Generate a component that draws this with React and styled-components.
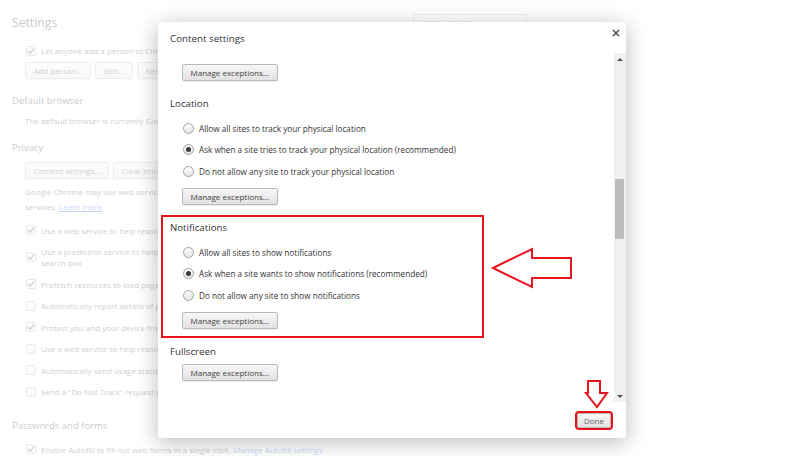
import React, { useLayoutEffect, useRef } from "react";
import styled, { createGlobalStyle } from "styled-components";

const GlobalStyle = createGlobalStyle`
  * { box-sizing: border-box; }
  html, body { margin: 0; padding: 0; background: #fff; }
  body {
    width: 800px;
    height: 456px;
    overflow: hidden;
    font-family: "Open Sans", "Noto Sans", Arial, sans-serif;
  }
  #root { position: relative; width: 800px; height: 456px; overflow: hidden; }
`;

/* ---------- settings page behind the overlay ---------- */

const Page = styled.div`
  width: 800px;
  height: 456px;
  padding: 0 12px;
  color: #333;
`;

const Header = styled.header`
  display: flex;
  align-items: center;
  justify-content: space-between;
  width: 515px;
  height: 38px;
  padding-top: 7px;
  border-bottom: 1px solid #e6e6e6;
`;

const PageTitle = styled.h1`
  margin: 0;
  font-size: 12.2px;
  font-weight: 400;
  color: #222;
`;

const SearchBox = styled.div`
  width: 114px;
  height: 16px;
  border: 1px solid #c8c8c8;
  font-size: 7.5px;
  line-height: 14px;
  padding-left: 4px;
  color: #999;
`;

const BgSection = styled.section`
  display: flex;
  flex-direction: column;
  align-items: flex-start;
  margin-top: ${({ $gap }) => $gap || 0}px;
`;

const BgHeading = styled.h3`
  margin: 0 0 4px;
  font-size: 9.5px;
  line-height: 16px;
  font-weight: 400;
  color: #222;
`;

const BgText = styled.p`
  margin: ${({ $top }) => $top || 0}px 0 0 13px;
  font-size: 8px;
  line-height: 15px;
  white-space: nowrap;
`;

const Link = styled.a`
  color: #1558d6;
  text-decoration: ${({ $underline }) => ($underline ? "underline" : "none")};
`;

const ButtonRow = styled.div`
  display: flex;
  gap: 4px;
  margin: ${({ $top }) => $top || 0}px 0 0 13px;
`;

const Button = styled.button`
  display: block;
  height: 17px;
  padding: 0 7.5px;
  border: 1px solid #b9b9b9;
  border-radius: 2px;
  background: linear-gradient(#f7f7f7, #e2e2e2);
  box-shadow: 0 1px 0 rgba(0, 0, 0, 0.06);
  font-family: inherit;
  font-size: 8px;
  line-height: 15px;
  color: #444;
  white-space: nowrap;
`;

const CheckList = styled.div`
  align-self: stretch;
  margin-top: ${({ $top }) => $top || 0}px;
`;

const CheckRow = styled.label`
  display: flex;
  align-items: center;
  gap: 5px;
  padding: 5.25px 0 5.25px 14px;
  font-size: 8px;
  line-height: 11px;
  white-space: nowrap;
`;

const Box = styled.span`
  flex: none;
  width: 10px;
  height: 10px;
  border: 1px solid #a8a8a8;
  border-radius: 2px;
  background: linear-gradient(#fff, #e8e8e8);
  display: flex;
  align-items: center;
  justify-content: center;
`;

function Checkbox({ checked }) {
  return (
    <Box>
      {checked && (
        <svg width="8" height="8" viewBox="0 0 8 8">
          <path d="M1.2 4.2 L3.2 6.2 L7 1.4" fill="none" stroke="#444" strokeWidth="1.4" />
        </svg>
      )}
    </Box>
  );
}

const Scrim = styled.div`
  position: absolute;
  inset: 0;
  background: rgba(255, 255, 255, 0.75);
`;

/* ---------- content settings dialog ---------- */

const Dialog = styled.div`
  position: absolute;
  left: 158px;
  top: 22px;
  width: 468px;
  height: 416px;
  display: flex;
  flex-direction: column;
  background: #fff;
  border-radius: 2px;
  box-shadow: 0 4px 22px rgba(0, 0, 0, 0.28);
  overflow: hidden;
  color: #333;
`;

const DialogHeader = styled.div`
  flex: none;
  display: flex;
  justify-content: space-between;
  height: 31px;
  padding: 10px 4px 0 12px;
`;

const DialogTitle = styled.h2`
  margin: 0;
  font-size: 9.8px;
  line-height: 14px;
  font-weight: 400;
  color: #333;
`;

const CloseButton = styled.button`
  width: 12px;
  height: 12px;
  margin-top: -5px;
  padding: 0;
  border: 0;
  background: none;
  display: flex;
  align-items: center;
  justify-content: center;
`;

const DialogBody = styled.div`
  flex: none;
  display: flex;
  height: 349px;
`;

const Viewport = styled.div`
  flex: 1;
  overflow: hidden;
`;

const Inner = styled.div`
  display: flex;
  flex-direction: column;
  align-items: flex-start;
  padding: 10px 12px 60px;
`;

const Section = styled.div`
  display: flex;
  flex-direction: column;
  align-items: flex-start;
  align-self: stretch;
  margin-bottom: ${({ $after }) => $after}px;
`;

const SectionTitle = styled.h3`
  margin: 0 0 4px;
  font-size: 9.7px;
  line-height: 16px;
  font-weight: 400;
  color: #333;
`;

const RadioList = styled.div`
  align-self: stretch;
  padding-top: 1.25px;
  margin-bottom: 6px;
`;

const RadioRow = styled.label`
  display: flex;
  align-items: center;
  gap: 5.5px;
  height: 21.5px;
  padding-left: 12.5px;
  font-size: 8.2px;
  white-space: nowrap;
`;

const Radio = styled.span`
  flex: none;
  width: 11px;
  height: 11px;
  border-radius: 50%;
  border: 1px solid #a3a3a3;
  background: linear-gradient(#fdfdfd, #e4e4e4);
  display: flex;
  align-items: center;
  justify-content: center;
  &::after {
    content: "";
    width: 5px;
    height: 5px;
    border-radius: 50%;
    background: ${({ $checked }) => ($checked ? "#3a3a3a" : "transparent")};
  }
`;

const SectionButton = styled(Button)`
  margin-left: 12px;
`;

const Highlight = styled.div`
  width: 323px;
  margin: -5px 0 6px -9px;
  padding: 3px 0 7px 7px;
  border: 2px solid #e8141b;
`;

const Scrollbar = styled.div`
  flex: none;
  width: 12px;
  display: flex;
  flex-direction: column;
  background: #f1f1f1;
`;

const ScrollArrow = styled.div`
  flex: none;
  height: 12px;
  display: flex;
  align-items: center;
  justify-content: center;
  &::before {
    content: "";
    border-left: 3px solid transparent;
    border-right: 3px solid transparent;
    ${({ $down }) => ($down ? "border-top" : "border-bottom")}: 3px solid #505050;
  }
`;

const Track = styled.div`
  flex: 1;
  padding-left: 1px;
`;

const Thumb = styled.div`
  width: 9px;
  height: 60px;
  background: #bcbcbc;
`;

const DialogFooter = styled.div`
  flex: 1;
  display: flex;
  justify-content: flex-end;
  align-items: flex-start;
  padding: 11px 15px 0 0;
`;

const DoneButton = styled(Button)`
  height: 15px;
  padding: 0 6px;
  line-height: 13px;
  color: #666;
  outline: 2px solid #e8141b;
`;

const Annotations = styled.svg`
  position: absolute;
  left: 0;
  top: 0;
  pointer-events: none;
`;

const sections = [
  {
    title: "Pop-ups",
    options: [
      "Allow all sites to show pop-ups",
      "Do not allow any site to show pop-ups (recommended)",
    ],
    checked: 1,
    after: 15,
  },
  {
    title: "Location",
    options: [
      "Allow all sites to track your physical location",
      "Ask when a site tries to track your physical location (recommended)",
      "Do not allow any site to track your physical location",
    ],
    checked: 1,
    after: 15,
  },
  {
    title: "Notifications",
    options: [
      "Allow all sites to show notifications",
      "Ask when a site wants to show notifications (recommended)",
      "Do not allow any site to show notifications",
    ],
    checked: 1,
    highlight: true,
    after: 0,
  },
  { title: "Fullscreen", options: [], after: 17 },
  {
    title: "Mouse Cursor",
    options: [
      "Allow all sites to disable the mouse cursor",
      "Ask when a site tries to disable the mouse cursor (recommended)",
      "Do not allow any site to disable the mouse cursor",
    ],
    checked: 1,
    after: 0,
    noButton: true,
  },
];

const privacyChecks = [
  ["Use a web service to help resolve navigation errors", true],
  [
    <>
      Use a prediction service to help complete searches and URLs typed in the address bar or the app launcher
      <br />
      search box
    </>,
    true,
  ],
  ["Prefetch resources to load pages more quickly", true],
  ["Automatically report details of possible security incidents to Google", false],
  ["Protect you and your device from dangerous sites", true],
  ["Use a web service to help resolve spelling errors", false],
  ["Automatically send usage statistics and crash reports to Google", false],
  ['Send a "Do Not Track" request with your browsing traffic', false],
];

function SettingsSection({ section }) {
  return (
    <Section $after={section.after}>
      <SectionTitle>{section.title}</SectionTitle>
      {section.options.length > 0 && (
        <RadioList>
          {section.options.map((opt, i) => (
            <RadioRow key={opt}>
              <Radio $checked={i === section.checked} />
              {opt}
            </RadioRow>
          ))}
        </RadioList>
      )}
      {!section.noButton && <SectionButton>Manage exceptions...</SectionButton>}
    </Section>
  );
}

function ContentSettings() {
  const viewport = useRef(null);

  useLayoutEffect(() => {
    if (viewport.current) viewport.current.scrollTop = 69;
  }, []);

  return (
    <Dialog>
      <DialogHeader>
        <DialogTitle>Content settings</DialogTitle>
        <CloseButton aria-label="Close">
          <svg width="8" height="8" viewBox="0 0 8 8">
            <path d="M1 1 L7 7 M7 1 L1 7" stroke="#555" strokeWidth="1.6" />
          </svg>
        </CloseButton>
      </DialogHeader>
      <DialogBody>
        <Viewport ref={viewport}>
          <Inner>
            {sections.map((s) =>
              s.highlight ? (
                <Highlight key={s.title}>
                  <SettingsSection section={s} />
                </Highlight>
              ) : (
                <SettingsSection key={s.title} section={s} />
              )
            )}
          </Inner>
        </Viewport>
        <Scrollbar>
          <ScrollArrow />
          <Track>
            <Thumb style={{ marginTop: 114 }} />
          </Track>
          <ScrollArrow $down />
        </Scrollbar>
      </DialogBody>
      <DialogFooter>
        <DoneButton>Done</DoneButton>
      </DialogFooter>
    </Dialog>
  );
}

export default function App() {
  return (
    <>
      <GlobalStyle />
      <Page>
        <Header>
          <PageTitle>Settings</PageTitle>
          <SearchBox>Search settings</SearchBox>
        </Header>

        <BgSection $gap={0}>
          <CheckList $top={2}>
            <CheckRow>
              <Checkbox checked />
              Let anyone add a person to Chrome
            </CheckRow>
          </CheckList>
          <ButtonRow>
            <Button>Add person...</Button>
            <Button>Edit...</Button>
            <Button>Remove...</Button>
            <Button>Import bookmarks and settings</Button>
          </ButtonRow>
        </BgSection>

        <BgSection $gap={14}>
          <BgHeading>Default browser</BgHeading>
          <BgText>The default browser is currently Google Chrome.</BgText>
        </BgSection>

        <BgSection $gap={12}>
          <BgHeading>Privacy</BgHeading>
          <ButtonRow $top={2}>
            <Button>Content settings...</Button>
            <Button>Clear browsing data...</Button>
          </ButtonRow>
          <BgText $top={5}>
            Google Chrome may use web services to improve your browsing experience. You may optionally disable these
            <br />
            services. <Link $underline>Learn more</Link>
          </BgText>
          <CheckList $top={6}>
            {privacyChecks.map(([text, checked], i) => (
              <CheckRow key={i}>
                <Checkbox checked={checked} />
                <span>{text}</span>
              </CheckRow>
            ))}
          </CheckList>
        </BgSection>

        <BgSection $gap={15}>
          <BgHeading>Passwords and forms</BgHeading>
          <CheckList $top={1}>
            <CheckRow>
              <Checkbox checked />
              <span>
                Enable Autofill to fill out web forms in a single click. <Link>Manage Autofill settings</Link>
              </span>
            </CheckRow>
          </CheckList>
        </BgSection>
      </Page>

      <Scrim />
      <ContentSettings />

      <Annotations width="800" height="456" viewBox="0 0 800 456">
        <polygon
          points="493,268 532,249 532,258 571,258 571,278 532,278 532,287"
          fill="none"
          stroke="#e8141b"
          strokeWidth="2"
          strokeLinejoin="miter"
        />
        <polygon
          points="588,381 600,381 600,393 607,393 597,407 586,393 588,393"
          fill="none"
          stroke="#e8141b"
          strokeWidth="2"
        />
      </Annotations>
    </>
  );
}
